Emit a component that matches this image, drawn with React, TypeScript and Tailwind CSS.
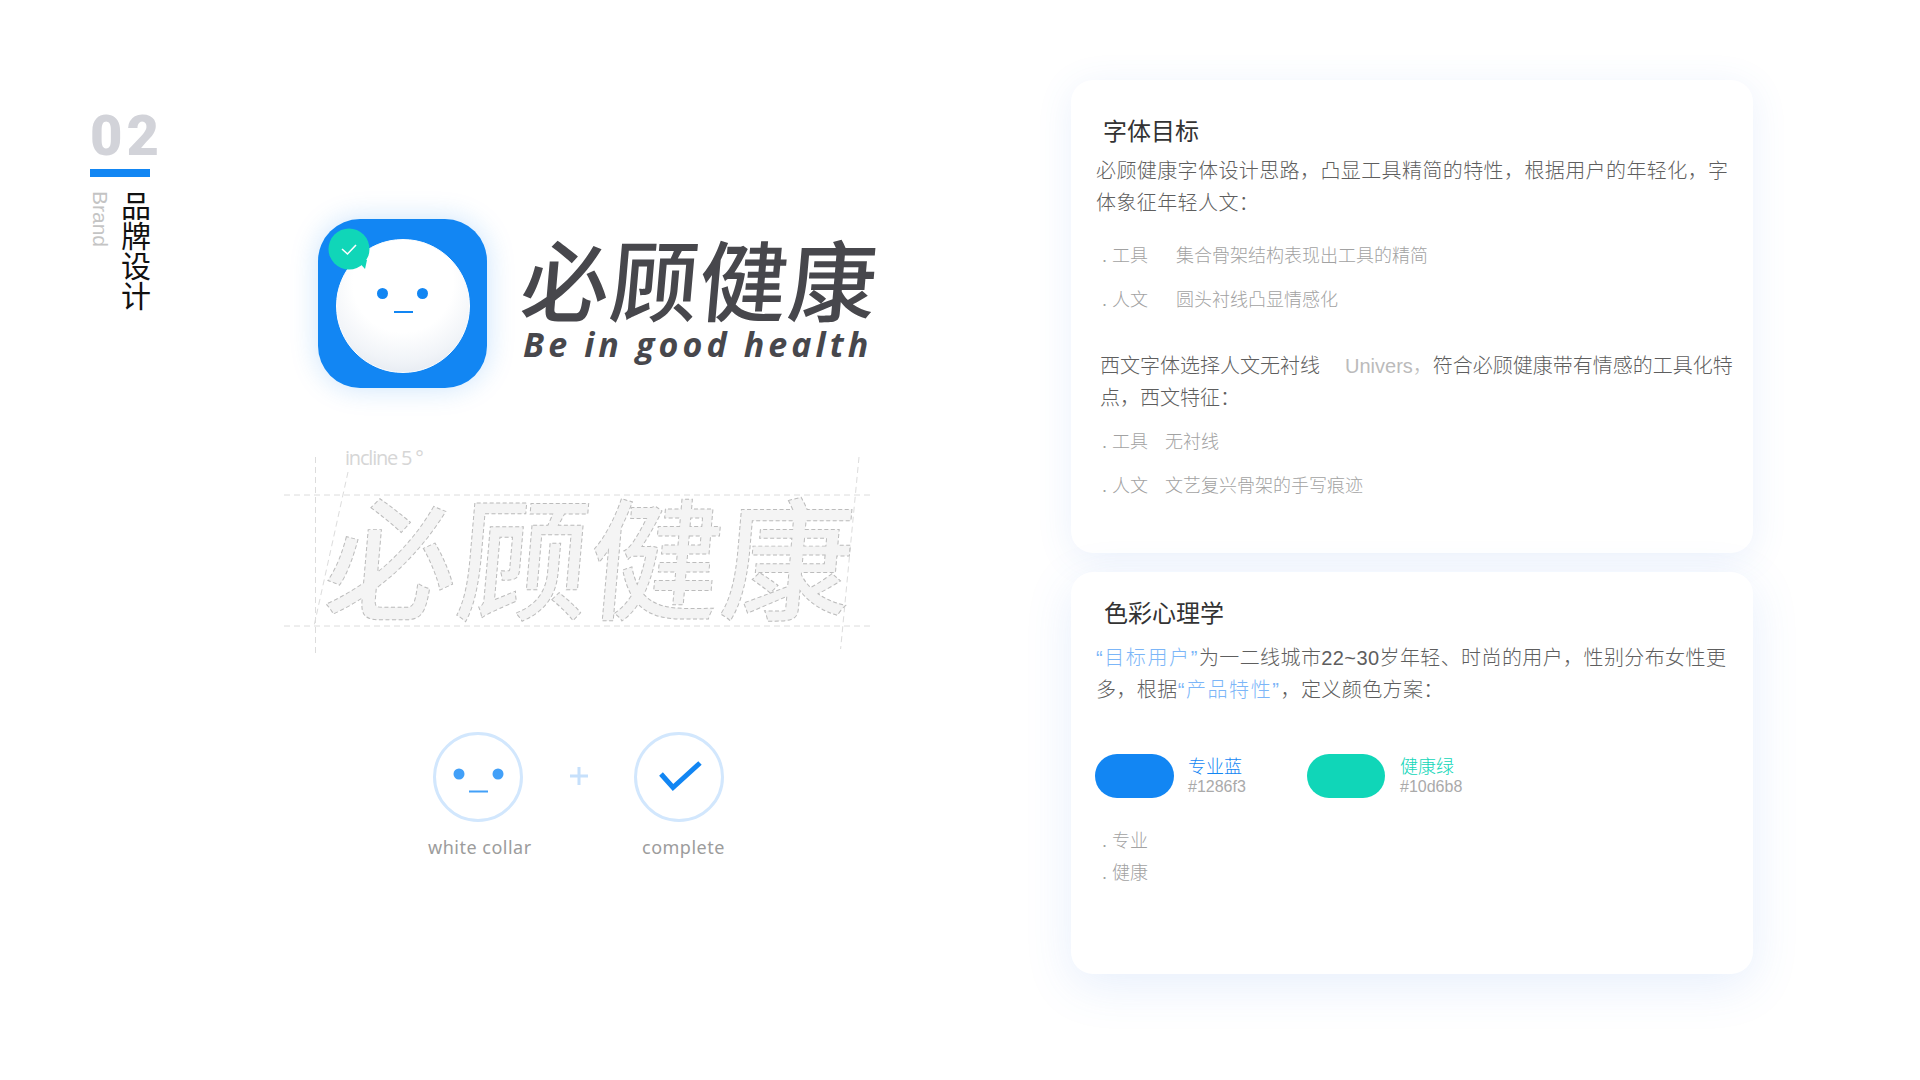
import React from 'react';

const CJK = "font-['Liberation_Sans','Noto_Sans_CJK_SC',sans-serif]";
const LOGO = "font-['Noto_Sans_CJK_SC',sans-serif]";

// full-width punctuation
const COMMA = '\uFF0C';
const COLON = '\uFF1A';

const Face = ({ size = 90 }: { size?: number }) => (
  <svg width={size} height={size} viewBox="0 0 90 90">
    <circle cx="45" cy="45" r="43.5" fill="#fff" stroke="#d2e7fd" strokeWidth="3" />
    <circle cx="26" cy="42" r="5.5" fill="#42a0f8" />
    <circle cx="65" cy="42" r="5.5" fill="#42a0f8" />
    <rect x="36" y="58.5" width="19" height="2" fill="#42a0f8" />
  </svg>
);

const Check = () => (
  <svg width="90" height="90" viewBox="0 0 90 90">
    <circle cx="45" cy="45" r="43.5" fill="#fff" stroke="#d2e7fd" strokeWidth="3" />
    <path d="M27 42 L39 55.5 L66 31" fill="none" stroke="#1286f3" strokeWidth="5" />
  </svg>
);

const AppIcon = () => (
  <div className="relative w-[169px] h-[169px] shrink-0 rounded-[42px] bg-[#1286f3] shadow-[0_0_28px_rgba(18,134,243,0.22)]">
    <div className="absolute left-[18px] top-[20px] w-[134px] h-[134px] rounded-full border border-white bg-[radial-gradient(circle_at_50%_32%,#ffffff_45%,#f1f4f8_70%,#d9e0ea_100%)]">
      <div className="absolute left-[40px] top-[48px] w-[11px] h-[11px] rounded-full bg-[#1286f3]" />
      <div className="absolute left-[80px] top-[48px] w-[11px] h-[11px] rounded-full bg-[#1286f3]" />
      <div className="absolute left-[57px] top-[71px] w-[19px] h-[2px] bg-[#1286f3]" />
    </div>
    <svg className="absolute left-[10px] top-[9px]" width="44" height="46" viewBox="0 0 44 46">
      <circle cx="21" cy="21" r="20.5" fill="#10d6b8" />
      <path d="M30 35 L40 35 L38 44 Z" fill="#10d6b8" transform="translate(-1 -3)" />
      <path d="M14 21 L19.5 26 L28 17" fill="none" stroke="#fff" strokeWidth="1.6" />
    </svg>
  </div>
);

const OutlineMark = () => (
  <svg width="620" height="240" viewBox="270 430 620 240" className="block">
    <g stroke="#dcdcdc" strokeWidth="1" strokeDasharray="6 4" fill="none">
      <path d="M284 495 H872" />
      <path d="M284 626 H872" />
      <path d="M315.5 457 V654" />
      <path d="M348 472 L314 626" />
      <path d="M859 457 L840.6 649" />
    </g>
    <text
      x="345"
      y="465"
      fill="#d6d6d6"
      fontSize="20"
      letterSpacing="-1.2"
      fontFamily="'Open Sans', sans-serif"
    >
      incline 5 °
    </text>
    <text
      x="322"
      y="610"
      transform="translate(53 0) skewX(-5)"
      fill="#f4f4f4"
      stroke="#bcbcbc"
      strokeWidth="1"
      strokeDasharray="4 2.5"
      fontSize="132"
      fontWeight="500"
      fontFamily="'Noto Sans CJK SC', sans-serif"
    >
      必顾健康
    </text>
  </svg>
);

const ListRow = ({ label, text, className }: { label: string; text: string; className: string }) => (
  <div className={`flex h-[24px] items-center pl-[6px] text-[18px] leading-[24px] font-light text-[#a2a2a2] ${className}`}>
    <span className="shrink-0 whitespace-pre">{`. ${label}`}</span>
    <span className="whitespace-nowrap">{text}</span>
  </div>
);

export default function App() {
  return (
    <div className={`flex w-[1920px] h-[1080px] overflow-hidden bg-white pl-[90px] ${CJK}`}>
      {/* section rail */}
      <div className="w-[180px] shrink-0 pt-[108px]">
        <div className="h-[57px] text-[56px] font-black leading-[57px] tracking-[4px] text-[#d2d3d9] font-['Roboto',sans-serif]">
          02
        </div>
        <div className="mt-[4px] w-[60px] h-[8px] bg-[#1286f3]" />
        <div className="mt-[14px] flex gap-[10px]">
          <span className="[writing-mode:vertical-rl] text-[21px] leading-[21px] text-[#c4c4c4] font-['Liberation_Sans',sans-serif]">
            Brand
          </span>
          <span className={`[writing-mode:vertical-rl] text-[30px] leading-[30px] text-[#111111] ${LOGO}`}>品牌设计</span>
        </div>
      </div>

      {/* logo column */}
      <div className="w-[801px] shrink-0 pt-[219px]">
        <div className="ml-[48px] flex">
          <AppIcon />
          <div className="ml-[35px] pt-[4px]">
            <div className={`[transform:skewX(-5deg)] whitespace-nowrap text-[88px] font-medium leading-[108px] tracking-[1px] text-[#47474c] ${LOGO}`}>
              必顾健康
            </div>
            <div className="-mt-[7px] ml-[1px] whitespace-nowrap text-[34px] font-bold italic leading-[40px] tracking-[4.1px] text-[#47474c] font-['Open_Sans',sans-serif]">
              Be in good health
            </div>
          </div>
        </div>

        <div className="mt-[42px]">
          <OutlineMark />
        </div>

        <div className="ml-[158px] mt-[62px] flex">
          <div className="w-[103px]">
            <div className="ml-[5px]">
              <Face />
            </div>
            <div className="mt-[13px] whitespace-nowrap text-[18px] leading-[24px] tracking-[0.5px] text-[#9c9c9c] font-['Noto_Sans',sans-serif]">
              white collar
            </div>
          </div>
          <svg className="ml-[39px] mt-[35px]" width="18" height="18" viewBox="0 0 18 18">
            <path d="M9 0 V18 M0 9 H18" stroke="#c6e0fb" strokeWidth="3" />
          </svg>
          <div className="ml-[46px] w-[103px]">
            <Check />
            <div className="ml-[8px] mt-[13px] whitespace-nowrap text-[18px] leading-[24px] tracking-[0.5px] text-[#9c9c9c] font-['Noto_Sans',sans-serif]">
              complete
            </div>
          </div>
        </div>
      </div>

      {/* cards */}
      <div className="w-[682px] shrink-0 pt-[80px] flex flex-col gap-[19px]">
        <div className="h-[473px] rounded-[22px] bg-white pl-[25px] pt-[36px] shadow-[0_6px_36px_rgba(70,130,230,0.11)]">
          <h2 className="pl-[7px] text-[24px] font-normal leading-[32px] text-[#333333]">字体目标</h2>
          <p className="mt-[7px] whitespace-nowrap text-[20px] leading-[32px] tracking-[0.4px] font-light text-[#5e5e5e]">
            必顾健康字体设计思路{COMMA}凸显工具精简的特性{COMMA}根据用户的年轻化{COMMA}字
            <br />
            体象征年轻人文{COLON}
          </p>
          <ListRow label="工具" text="集合骨架结构表现出工具的精简" className="mt-[25px] [&>span:first-child]:w-[74px]" />
          <ListRow label="人文" text="圆头衬线凸显情感化" className="mt-[20px] [&>span:first-child]:w-[74px]" />
          <p className="mt-[38px] pl-[4px] whitespace-nowrap text-[20px] leading-[32px] font-light text-[#5e5e5e]">
            西文字体选择人文无衬线
            <span className="ml-[25px] text-[#bbbbbb]">Univers{COMMA}</span>
            符合必顾健康带有情感的工具化特
            <br />
            点{COMMA}西文特征{COLON}
          </p>
          <ListRow label="工具" text="无衬线" className="mt-[16px] [&>span:first-child]:w-[63px]" />
          <ListRow label="人文" text="文艺复兴骨架的手写痕迹" className="mt-[20px] [&>span:first-child]:w-[63px]" />
        </div>

        <div className="h-[402px] rounded-[22px] bg-white pl-[24px] pt-[26px] shadow-[0_12px_48px_rgba(70,130,230,0.13)]">
          <h2 className="pl-[9px] text-[24px] font-normal leading-[32px] text-[#333333]">色彩心理学</h2>
          <p className="mt-[12px] pl-[1px] whitespace-nowrap text-[20px] leading-[32px] tracking-[0.4px] font-light text-[#5e5e5e]">
            <span className="tracking-[1.6px] text-[#7cb6f8]">“目标用户”</span>为一二线城市22~30岁年轻、时尚的用户{COMMA}性别分布女性更
            <br />
            多{COMMA}根据<span className="tracking-[1.6px] text-[#7cb6f8]">“产品特性”</span>{COMMA}定义颜色方案{COLON}
          </p>
          <div className="mt-[48px] flex">
            <div className="w-[79px] h-[44px] rounded-[22px] bg-[#1286f3]" />
            <div className="ml-[14px] w-[119px] pt-[1px]">
              <div className="text-[18px] leading-[24px] font-light text-[#1286f3]">专业蓝</div>
              <div className="-mt-[2px] text-[16px] leading-[20px] text-[#aaaaaa]">#1286f3</div>
            </div>
            <div className="w-[78px] h-[44px] rounded-[22px] bg-[#10d6b8]" />
            <div className="ml-[15px] pt-[1px]">
              <div className="text-[18px] leading-[24px] font-light text-[#10d6b8]">健康绿</div>
              <div className="-mt-[2px] text-[16px] leading-[20px] text-[#aaaaaa]">#10d6b8</div>
            </div>
          </div>
          <div className="mt-[27px] pl-[7px] text-[18px] leading-[32px] font-light text-[#a2a2a2]">
            <div>. 专业</div>
            <div>. 健康</div>
          </div>
        </div>
      </div>
    </div>
  );
}
